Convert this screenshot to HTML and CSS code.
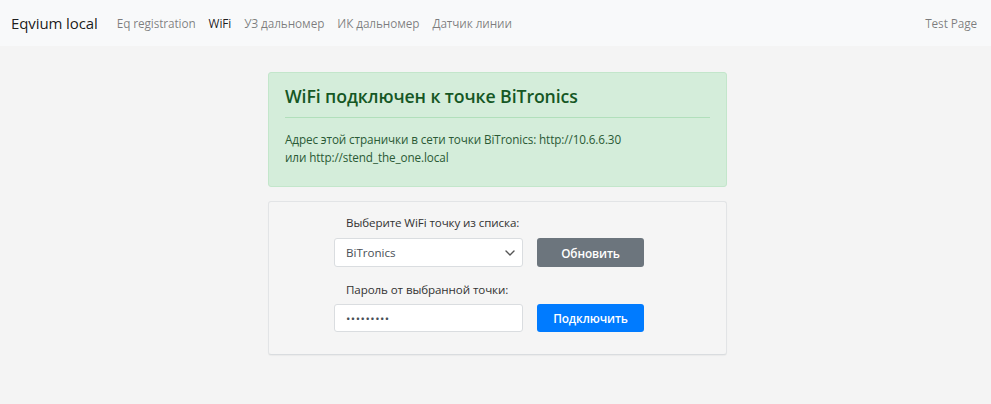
FILE: index.html
```html
<!DOCTYPE html>
<html lang="ru">
<head>
<meta charset="utf-8">
<title>Eqvium local</title>
<link rel="stylesheet" href="styles.css">
</head>
<body>
<nav class="navbar">
  <a class="brand" href="#">Eqvium local</a>
  <ul class="nav">
    <li><a class="nav-link" href="#">Eq registration</a></li>
    <li><a class="nav-link active" href="#">WiFi</a></li>
    <li><a class="nav-link" href="#">УЗ дальномер</a></li>
    <li><a class="nav-link" href="#">ИК дальномер</a></li>
    <li><a class="nav-link" href="#">Датчик линии</a></li>
  </ul>
  <a class="nav-link right" href="#">Test Page</a>
</nav>
<main class="main">
  <div class="column">
    <div class="alert">
      <h4 class="alert-heading">WiFi подключен к точке BiTronics</h4>
      <hr class="alert-rule">
      <p class="alert-text">Адрес этой странички в сети точки BiTronics: http://10.6.6.30<br>или http://stend_the_one.local</p>
    </div>
    <form class="card">
      <label class="label" for="ssid">Выберите WiFi точку из списка:</label>
      <div class="row">
        <div class="select-wrap">
          <select id="ssid" class="control select"><option>BiTronics</option></select>
          <svg class="chevron" width="10" height="6" viewBox="0 0 10 6"><path d="M1 1l4 4 4-4" fill="none" stroke="#555" stroke-width="1.4" stroke-linecap="round" stroke-linejoin="round"/></svg>
        </div>
        <button type="button" class="btn btn-secondary">Обновить</button>
      </div>
      <label class="label label-2" for="pass">Пароль от выбранной точки:</label>
      <div class="row">
        <input id="pass" class="control" type="password" value="123456789">
        <button type="button" class="btn btn-primary">Подключить</button>
      </div>
    </form>
  </div>
</main>
</body>
</html>
```

FILE: styles.css
```css
* { box-sizing: border-box; }
html, body { margin: 0; }
body {
  background: #f4f4f4;
  font-family: "Open Sans", "Noto Sans", sans-serif;
  color: #212529;
  height: 404px;
}
a { text-decoration: none; }

.navbar {
  height: 46px;
  background: #f8f9fa;
  display: flex;
  align-items: center;
  padding: 0 7.5px 0 11px;
}
.brand {
  font-size: 15px;
  color: rgba(0,0,0,.9);
  margin-right: 12.5px;
  letter-spacing: -0.1px;
}
.nav {
  list-style: none;
  display: flex;
  margin: 0;
  padding: 0;
}
.nav-link {
  display: block;
  font-size: 11.8px;
  color: rgba(0,0,0,.5);
  padding: 0 6.5px;
  letter-spacing: -0.1px;
}
.nav-link.active { color: rgba(0,0,0,.9); }
.right { margin-left: auto; }

.main {
  display: flex;
  justify-content: center;
  padding: 26px 0 0 4px;
}
.column {
  width: 459px;
  display: flex;
  flex-direction: column;
  gap: 14px;
}
.alert {
  background: #d4edda;
  border: 1px solid #c3e6cb;
  border-radius: 3px;
  color: #155724;
  padding: 10px 16px 16px;
  height: 115px;
}
.alert-heading {
  margin: 0;
  font-size: 17.7px;
  font-weight: 600;
  line-height: 26px;
  letter-spacing: -0.1px;
}
.alert-rule {
  border: 0;
  border-top: 1px solid #b1dfbb;
  margin: 8px 0 12px;
}
.alert-text {
  margin: 0;
  font-size: 11.7px;
  line-height: 18px;
  letter-spacing: -0.1px;
  color: #2a5a35;
}

.card {
  border: 1px solid #e2e4e6;
  border-bottom-color: #d9dcdf;
  border-radius: 3px;
  background: #f5f5f5;
  box-shadow: 0 1px 1px rgba(0,0,0,.04);
  padding: 13px 0 22px 65px;
  display: flex;
  flex-direction: column;
  margin: 0;
}
.label {
  font-size: 11.6px;
  line-height: 16px;
  color: #333;
  padding-left: 12px;
  margin-bottom: 7px;
  letter-spacing: -0.1px;
}
.label-2 { margin-top: 15px; margin-bottom: 6px; }
.row {
  display: flex;
  gap: 14px;
}
.select-wrap { position: relative; }
.control {
  width: 189px;
  height: 29px;
  background: #fff;
  border: 1px solid #dadde0;
  border-radius: 3px;
  font-family: inherit;
  font-size: 11.6px;
  color: #495057;
  padding: 0 11px;
  margin: 0;
  outline: none;
}
input.control { height: 28px; letter-spacing: 0.5px; }
.select {
  appearance: none;
  -webkit-appearance: none;
  display: block;
}
.chevron {
  position: absolute;
  right: 8px;
  top: 12px;
}
.btn {
  width: 107px;
  height: 29px;
  border: 0;
  border-radius: 3px;
  color: #fff;
  font-family: inherit;
  font-size: 11.8px;
  font-weight: 600;
  margin: 0;
  letter-spacing: -0.1px;
}
.btn-primary { height: 28px; }
.btn-secondary { background: #6c757d; }
.btn-primary { background: #007bff; }
```
